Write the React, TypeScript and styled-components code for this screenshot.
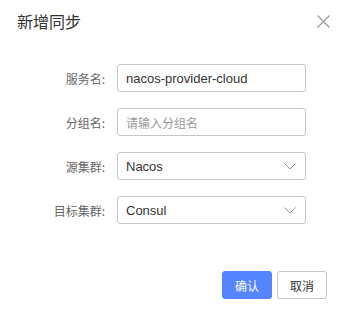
import styled, { createGlobalStyle } from 'styled-components';

const GlobalStyle = createGlobalStyle`
  html, body {
    margin: 0;
    padding: 0;
    background: #fff;
  }
  body {
    font-family: "Liberation Sans", "Noto Sans CJK SC", sans-serif;
    color: #333;
  }
`;

const fields = [
  { label: '服务名:', value: 'nacos-provider-cloud', kind: 'input' },
  { label: '分组名:', placeholder: '请输入分组名', kind: 'input' },
  { label: '源集群:', value: 'Nacos', kind: 'select' },
  { label: '目标集群:', value: 'Consul', kind: 'select' },
];

const App = () => {
  return (
    <>
      <GlobalStyle />
      <Dialog>
        <Header>
          <Title>新增同步</Title>
          <Close aria-label="close">
            <svg width="13" height="13" viewBox="0 0 13 13">
              <path d="M0.5 0.5 L12.5 12.5 M12.5 0.5 L0.5 12.5" stroke="#999" strokeWidth="1.1" fill="none" />
            </svg>
          </Close>
        </Header>
        <Body>
          {fields.map(f => (
            <Row key={f.label}>
              <Label>{f.label}</Label>
              <Field>
                {f.value ? <Value>{f.value}</Value> : <Placeholder>{f.placeholder}</Placeholder>}
                {f.kind === 'select' && (
                  <svg width="12" height="7" viewBox="0 0 12 7">
                    <path d="M0.5 0.5 L6 6 L11.5 0.5" stroke="#999" strokeWidth="1" fill="none" />
                  </svg>
                )}
              </Field>
            </Row>
          ))}
        </Body>
        <Footer>
          <Button primary>确认</Button>
          <Button>取消</Button>
        </Footer>
      </Dialog>
    </>
  );
};

const Dialog = styled.div`
  width: 339px;
  height: 309px;
  display: flex;
  flex-direction: column;
  background: #fff;
`;

const Header = styled.div`
  display: flex;
  justify-content: space-between;
  align-items: center;
  height: 42px;
  padding: 0 9px 0 17px;
`;

const Title = styled.div`
  font-family: "Noto Sans CJK SC", sans-serif;
  font-size: 16px;
  color: #333;
`;

const Close = styled.div`
  display: flex;
  width: 13px;
  height: 13px;
  margin-right: 0;
`;

const Body = styled.div`
  display: flex;
  flex-direction: column;
  gap: 16px;
  padding-top: 22px;
`;

const Row = styled.div`
  display: flex;
  align-items: center;
  height: 28px;
`;

const Label = styled.div`
  width: 105px;
  padding-right: 12px;
  text-align: right;
  font-family: "Noto Sans CJK SC", sans-serif;
  font-size: 12px;
  color: #666;
`;

const Field = styled.div`
  box-sizing: border-box;
  width: 189px;
  height: 28px;
  border: 1px solid #c4c6cf;
  border-radius: 3px;
  display: flex;
  align-items: center;
  justify-content: space-between;
  padding: 0 9px 0 8px;
`;

const Value = styled.span`
  font-size: 13px;
  color: #333;
`;

const Placeholder = styled.span`
  font-family: "Noto Sans CJK SC", sans-serif;
  font-size: 12px;
  color: #999;
`;

const Footer = styled.div`
  margin-top: auto;
  display: flex;
  justify-content: flex-end;
  gap: 5px;
  padding: 0 12px 10px 0;
`;

const Button = styled.div<{ primary?: boolean }>`
  box-sizing: border-box;
  width: 50px;
  height: 28px;
  display: flex;
  align-items: center;
  justify-content: center;
  border-radius: 3px;
  font-family: "Noto Sans CJK SC", sans-serif;
  font-size: 12px;
  background: ${p => (p.primary ? '#5584ff' : '#fff')};
  color: ${p => (p.primary ? '#fff' : '#333')};
  border: 1px solid ${p => (p.primary ? '#5584ff' : '#c4c6cf')};
`;

export default App;
